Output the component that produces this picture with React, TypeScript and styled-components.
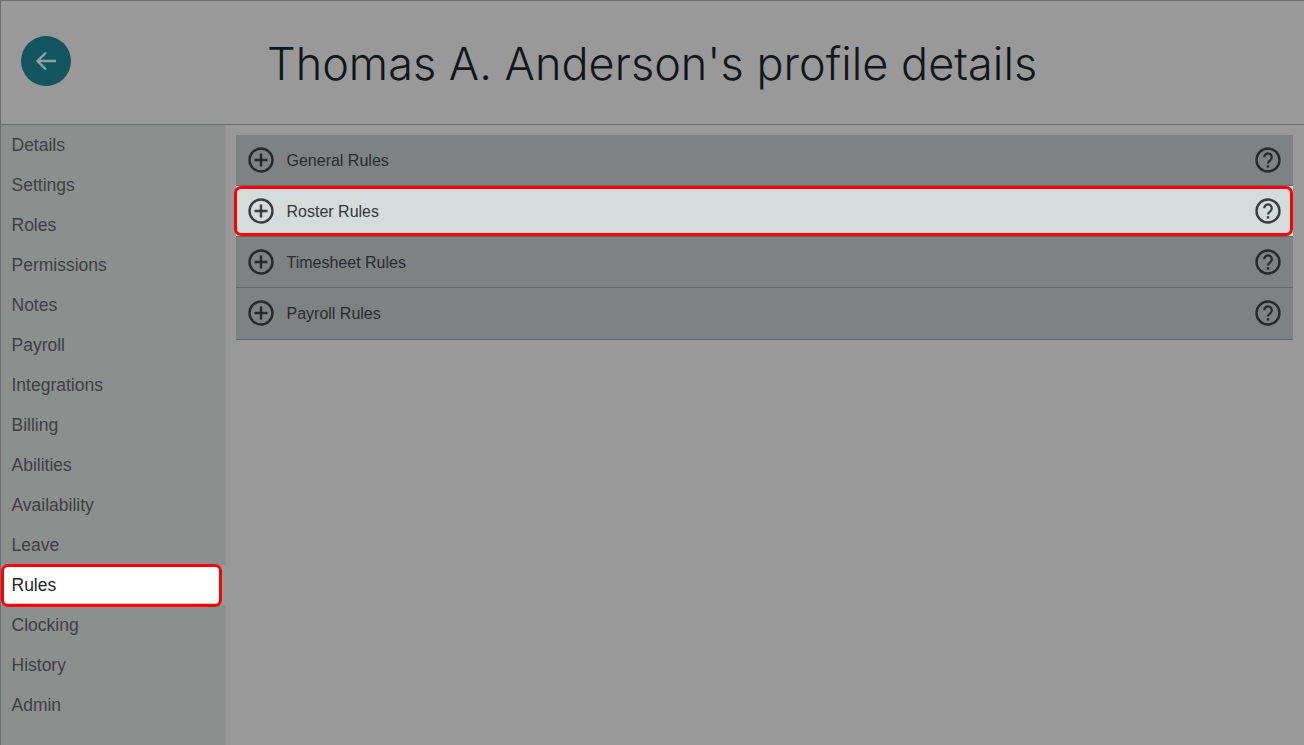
import React from "react";
import styled, { createGlobalStyle } from "styled-components";

const Global = createGlobalStyle`
  html, body { margin: 0; padding: 0; height: 100%; background: #999999; }
  #root { height: 100%; }
  * { box-sizing: border-box; }
`;

const Page = styled.div`
  width: 1304px;
  height: 745px;
  display: flex;
  flex-direction: column;
  overflow: hidden;
  background: #999999;
  border-left: 1px solid #6e6e6e;
  border-top: 1px solid #6e6e6e;
  font-family: "Liberation Sans", Arial, sans-serif;
`;

const Header = styled.header`
  height: 124px;
  flex: none;
  display: flex;
  align-items: center;
  padding: 0 0 0 20px;
  border-bottom: 1px solid #6e6e6e;
`;

const BackButton = styled.button`
  width: 50px;
  height: 50px;
  flex: none;
  margin-top: -3px;
  padding: 0;
  border: 0;
  border-radius: 50%;
  background: #125561;
  display: flex;
  align-items: center;
  justify-content: center;
`;

const Title = styled.h1`
  margin: 2px 0 0 196px;
  font-family: Inter, "Noto Sans", sans-serif;
  font-weight: 300;
  font-size: 45px;
  line-height: 1.2;
  letter-spacing: 0.03px;
  white-space: nowrap;
  color: #10161a;
`;

const Body = styled.div`
  flex: 1;
  display: flex;
  min-height: 0;
`;

const Sidebar = styled.nav`
  width: 225px;
  flex: none;
  display: flex;
  flex-direction: column;
  background: #8d8f8e;
`;

const NavSlot = styled.div<{ $active?: boolean }>`
  height: 40px;
  flex: none;
  background: ${(p) => (p.$active ? "#999999" : "transparent")};
  padding: ${(p) => (p.$active ? "0 4px 0 0" : "0")};
`;

const NavItem = styled.a<{ $active?: boolean }>`
  display: flex;
  align-items: center;
  height: ${(p) => (p.$active ? "43px" : "100%")};
  font-size: 17.5px;
  padding-left: ${(p) => (p.$active ? "7.5px" : "10.5px")};
  color: ${(p) => (p.$active ? "#26292c" : "#3d3f42")};
  ${(p) =>
    p.$active
      ? `margin-top: -1px;
         background: #ffffff;
         border: 3px solid #fe0000;
         border-radius: 7px;
         box-shadow: inset 0 -1px 0 #cccccc;`
      : ""}
`;

const Main = styled.main`
  flex: 1;
  padding: 10px 11px 0 10px;
`;

const Row = styled.div<{ $active?: boolean }>`
  position: relative;
  height: 51px;
  display: flex;
  align-items: center;
  padding: 0 12px;
  background: ${(p) => (p.$active ? "#d6dbdb" : "#7e8282")};
  border-bottom: 1px solid #646767;
  &:last-child {
    height: 52px;
    padding-bottom: 1px;
  }
  ${(p) =>
    p.$active
      ? `&::after {
          content: "";
          position: absolute;
          inset: 0 0 0 -2px;
          border: 3px solid #fe0000;
          border-radius: 7px;
        }`
      : ""}
`;

const RowLabel = styled.span<{ $active?: boolean }>`
  flex: 1;
  margin: 2px 0 0 12.5px;
  font-size: 16px;
  color: ${(p) => (p.$active ? "#33373a" : "#282b2e")};
`;

const IconSlot = styled.span`
  width: 26px;
  height: 26px;
  flex: none;
  display: block;
`;

const Plus = ({ color }: { color: string }) => (
  <IconSlot>
    <svg width="26" height="26" viewBox="0 0 26 26" fill="none" stroke={color}>
      <circle cx="13" cy="13" r="11.5" strokeWidth="2.4" />
      <path d="M13 6.5v13M6.5 13h13" strokeWidth="2.4" />
    </svg>
  </IconSlot>
);

const Help = ({ color }: { color: string }) => (
  <IconSlot>
    <svg width="26" height="26" viewBox="0 0 26 26" fill="none" stroke={color}>
      <circle cx="13" cy="13" r="11.5" strokeWidth="2.4" />
      <path d="M9.2 10.2a3.8 3.8 0 1 1 6 3.1c-1.3.9-2.2 1.6-2.2 3.2" strokeWidth="2.2" />
      <path d="M13 18.2v2.4" strokeWidth="2.4" />
    </svg>
  </IconSlot>
);

const navItems = ["Details", "Settings", "Roles", "Permissions", "Notes", "Payroll", "Integrations", "Billing", "Abilities", "Availability", "Leave", "Rules", "Clocking", "History", "Admin"];
const rules = ["General Rules", "Roster Rules", "Timesheet Rules", "Payroll Rules"];

export default function App() {
  return (
    <Page>
      <Global />
      <Header>
        <BackButton aria-label="Back">
          <svg width="24" height="24" viewBox="0 0 24 24" fill="none" stroke="#8fa3a7" strokeWidth="2.4">
            <path d="M22 12H4M12 3.5 3.5 12l8.5 8.5" />
          </svg>
        </BackButton>
        <Title>Thomas A. Anderson's profile details</Title>
      </Header>
      <Body>
        <Sidebar>
          {navItems.map((n) => (
            <NavSlot key={n} $active={n === "Rules"}>
              <NavItem $active={n === "Rules"}>{n}</NavItem>
            </NavSlot>
          ))}
        </Sidebar>
        <Main>
          {rules.map((r) => {
            const active = r === "Roster Rules";
            const color = active ? "#3a3d40" : "#26292b";
            return (
              <Row key={r} $active={active}>
                <Plus color={color} />
                <RowLabel $active={active}>{r}</RowLabel>
                <Help color={color} />
              </Row>
            );
          })}
        </Main>
      </Body>
    </Page>
  );
}
